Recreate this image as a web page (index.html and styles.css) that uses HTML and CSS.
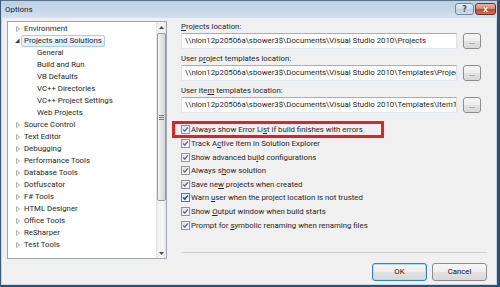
FILE: index.html
```html
<!DOCTYPE html>
<html lang="en">

<head>
  <meta charset="UTF-8">
  <title>Options</title>
  <link rel="stylesheet" href="styles.css">
</head>

<body>
  <!-- shared glyphs -->
  <svg class="defs" width="0" height="0">
    <defs>
      <linearGradient id="cbFill" x1="0" y1="0" x2="1" y2="1">
        <stop offset="0" stop-color="#dadada" />
        <stop offset="1" stop-color="#fbfbfb" />
      </linearGradient>
      <linearGradient id="cbHot" x1="0" y1="0" x2="1" y2="1">
        <stop offset="0" stop-color="#b9dff5" />
        <stop offset="1" stop-color="#eef8fe" />
      </linearGradient>
      <symbol id="chk" viewBox="0 0 9 9">
        <rect x="0.5" y="0.5" width="8" height="8" fill="#f6f6f6" stroke="#939393" />
        <rect x="1.5" y="1.5" width="6" height="6" fill="url(#cbFill)" />
        <path d="M2.2 4.5 L3.8 6.2 L6.9 2.4" fill="none" stroke="#4a5f90" stroke-width="1.2" />
      </symbol>
      <symbol id="chkHot" viewBox="0 0 9 9">
        <rect x="0.5" y="0.5" width="8" height="8" fill="#f2fafe" stroke="#3c7fb1" />
        <rect x="1.5" y="1.5" width="6" height="6" fill="url(#cbHot)" />
        <path d="M2.2 4.5 L3.8 6.2 L6.9 2.4" fill="none" stroke="#1f3f7a" stroke-width="1.3" />
      </symbol>
      <symbol id="triClosed" viewBox="0 0 7 12">
        <path d="M2.5 3.5 L5.5 6 L2.5 8.5 Z" fill="#fff" stroke="#a8a8a8" stroke-width="0.9" />
      </symbol>
      <symbol id="triOpen" viewBox="0 0 7 12">
        <path d="M5.5 3.6 L5.5 8 L1.1 8 Z" fill="#3a3a3a" />
      </symbol>
    </defs>
  </svg>

  <div class="window">
    <div class="titlebar">
      <span class="title">Options</span>
      <div class="caption">
        <span class="cap-btn help">?</span>
        <span class="cap-btn close">x</span>
      </div>
    </div>

    <div class="client">
      <div class="tree">
        <div class="tree-items">
          <div class="node"><svg class="exp"><use href="#triClosed" /></svg><span class="lbl">Environment</span></div>
          <div class="node"><svg class="exp"><use href="#triOpen" /></svg><span class="lbl sel">Projects and Solutions</span></div>
          <div class="node child"><span class="lbl">General</span></div>
          <div class="node child"><span class="lbl">Build and Run</span></div>
          <div class="node child"><span class="lbl">VB Defaults</span></div>
          <div class="node child"><span class="lbl">VC++ Directories</span></div>
          <div class="node child"><span class="lbl">VC++ Project Settings</span></div>
          <div class="node child"><span class="lbl">Web Projects</span></div>
          <div class="node"><svg class="exp"><use href="#triClosed" /></svg><span class="lbl">Source Control</span></div>
          <div class="node"><svg class="exp"><use href="#triClosed" /></svg><span class="lbl">Text Editor</span></div>
          <div class="node"><svg class="exp"><use href="#triClosed" /></svg><span class="lbl">Debugging</span></div>
          <div class="node"><svg class="exp"><use href="#triClosed" /></svg><span class="lbl">Performance Tools</span></div>
          <div class="node"><svg class="exp"><use href="#triClosed" /></svg><span class="lbl">Database Tools</span></div>
          <div class="node"><svg class="exp"><use href="#triClosed" /></svg><span class="lbl">Dotfuscator</span></div>
          <div class="node"><svg class="exp"><use href="#triClosed" /></svg><span class="lbl">F# Tools</span></div>
          <div class="node"><svg class="exp"><use href="#triClosed" /></svg><span class="lbl">HTML Designer</span></div>
          <div class="node"><svg class="exp"><use href="#triClosed" /></svg><span class="lbl">Office Tools</span></div>
          <div class="node"><svg class="exp"><use href="#triClosed" /></svg><span class="lbl">ReSharper</span></div>
          <div class="node"><svg class="exp"><use href="#triClosed" /></svg><span class="lbl">Test Tools</span></div>
        </div>
        <div class="vscroll">
          <div class="sb-btn"><svg width="5" height="3"><path d="M0 3 L2.5 0 L5 3 Z" fill="#4d4d4d" /></svg></div>
          <div class="sb-thumb"><span class="grip"></span></div>
          <div class="sb-track"></div>
          <div class="sb-btn"><svg width="5" height="3"><path d="M0 0 L5 0 L2.5 3 Z" fill="#4d4d4d" /></svg></div>
        </div>
      </div>

      <div class="settings">
        <div class="loc">
          <div class="cap"><u>P</u>rojects location:</div>
          <div class="loc-row">
            <div class="field">\\nlon12p20506a\sbower3$\Documents\Visual Studio 2010\Projects</div>
            <div class="dots">...</div>
          </div>
        </div>
        <div class="loc">
          <div class="cap">User p<u>r</u>oject templates location:</div>
          <div class="loc-row">
            <div class="field"><span class="path">\\nlon12p20506a\sbower3$\Documents\Visual Studio 2010\Templates\ProjectTemplates</span></div>
            <div class="dots">...</div>
          </div>
        </div>
        <div class="loc">
          <div class="cap">User ite<u>m</u> templates location:</div>
          <div class="loc-row">
            <div class="field"><span class="path">\\nlon12p20506a\sbower3$\Documents\Visual Studio 2010\Templates\ItemTemplates</span></div>
            <div class="dots">...</div>
          </div>
        </div>

        <div class="checks">
          <div class="chk marked"><svg class="cb"><use href="#chk" /></svg><span>Always show Error Li<u>s</u>t if build finishes with errors</span></div>
          <div class="chk"><svg class="cb"><use href="#chk" /></svg><span>Track A<u>c</u>tive Item in Solution Explorer</span></div>
          <div class="chk"><svg class="cb"><use href="#chk" /></svg><span>Show advanced bu<u>i</u>ld configurations</span></div>
          <div class="chk"><svg class="cb"><use href="#chk" /></svg><span>Always s<u>h</u>ow solution</span></div>
          <div class="chk"><svg class="cb"><use href="#chk" /></svg><span>Save ne<u>w</u> projects when created</span></div>
          <div class="chk"><svg class="cb"><use href="#chkHot" /></svg><span>Warn <u>u</u>ser when the project location is not trusted</span></div>
          <div class="chk"><svg class="cb"><use href="#chk" /></svg><span>Show <u>O</u>utput window when build starts</span></div>
          <div class="chk"><svg class="cb"><use href="#chk" /></svg><span>Prompt for <u>s</u>ymbolic renaming when renaming files</span></div>
        </div>

        <div class="sep"></div>
        <div class="actions">
          <button class="btn default">OK</button>
          <button class="btn">Cancel</button>
        </div>
      </div>
    </div>
  </div>
</body>

</html>
```

FILE: styles.css
```css
body {
  margin: 0;
  font-family: Roboto, 'Open Sans', sans-serif;
  font-size: 7.8px;
  color: #262626;
  background: #2c5173;
}

.defs {
  display: block;
  width: 0;
  height: 0;
  overflow: hidden;
}

.window {
  width: 500px;
  height: 287px;
  box-sizing: border-box;
  display: flex;
  flex-direction: column;
  border-top: 1px solid #5b7189;
  border-left: 1px solid #3d5a77;
  border-right: 3px solid #2c5173;
  border-bottom: 2px solid #2c5173;
  padding: 0 1px 1px 1px;
  background: linear-gradient(#bccfe4, #d3e0ee 17px, #c6d6e9 18px);
}

/* title bar */
.titlebar {
  height: 17px;
  display: flex;
  justify-content: space-between;
  padding-left: 3px;
}

.title {
  line-height: 17px;
  font-size: 8px;
  color: #1c1c1c;
}

.caption {
  display: flex;
  gap: 1px;
  margin-top: 2px;
}

.cap-btn {
  height: 12px;
  box-sizing: border-box;
  border: 1px solid #74879e;
  border-radius: 3px;
  display: flex;
  align-items: center;
  justify-content: center;
  font: bold 8px 'DejaVu Sans', sans-serif;
}

.help {
  width: 19px;
  background: linear-gradient(#e4ecf5, #cfdbe9 50%, #bccde1 51%, #d2deec);
  color: #43536a;
}

.close {
  width: 21px;
  background: linear-gradient(#ebb3a5, #d98a76 48%, #c3462d 52%, #d7735a);
  border-color: #6a2f25;
  color: #fff;
  text-shadow: 0 0 1px #4a0d05;
}

/* client area */
.client {
  flex: 1;
  display: flex;
  gap: 14px;
  background: #f0f0f0;
  padding: 3px 9px 0 5px;
}

.tree {
  width: 160px;
  height: 238px;
  box-sizing: border-box;
  border: 1px solid #a0a6ae;
  background: #fff;
  display: flex;
}

.tree-items {
  flex: 1;
  padding-top: 1px;
  overflow: hidden;
}

.node {
  height: 12px;
  display: flex;
  align-items: center;
  padding-left: 6px;
  white-space: nowrap;
}

.node.child {
  padding-left: 26px;
}

.exp {
  width: 7px;
  height: 12px;
  flex: none;
}

.lbl {
  line-height: 10px;
  padding: 0 2px;
  border: 1px solid transparent;
  border-radius: 2px;
}

.lbl.sel {
  border-color: #a9cdee;
  background: linear-gradient(#f4f9fe, #deecfb);
}

.vscroll {
  width: 10px;
  display: flex;
  flex-direction: column;
  background: linear-gradient(to right, #e3e3e3, #f5f5f5 30%, #f5f5f5 70%, #e6e6e6);
}

.sb-btn {
  height: 10px;
  display: flex;
  align-items: center;
  justify-content: center;
}

.sb-thumb {
  height: 168px;
  margin: 1px 0 0 1px;
  box-sizing: border-box;
  border: 1px solid #9a9a9a;
  border-radius: 2px;
  background: linear-gradient(to right, #f6f6f6, #e4e4e4 50%, #d4d4d4);
  display: flex;
  align-items: center;
  justify-content: center;
}

.grip {
  width: 5px;
  height: 5px;
  background: repeating-linear-gradient(#7a7a7a 0 1px, transparent 1px 2px);
}

.sb-track {
  flex: 1;
}

/* right side */
.settings {
  width: 306px;
  display: flex;
  flex-direction: column;
}

.loc {
  margin-bottom: 4px;
}

.cap {
  height: 12px;
  line-height: 12px;
}

.loc-row {
  display: flex;
  gap: 6px;
  height: 16px;
}

.field {
  width: 276px;
  box-sizing: border-box;
  border: 1px solid;
  border-color: #abadb3 #dbdfe6 #e3e9ef #e2e3ea;
  background: #fff;
  padding: 0 3px;
  line-height: 14px;
  white-space: nowrap;
  overflow: hidden;
}

.dots,
.btn {
  box-sizing: border-box;
  border: 1px solid #8c8c8c;
  border-radius: 3px;
  background: linear-gradient(#f6f6f6, #eeeeee 50%, #e2e2e2 50%, #d9d9d9);
}

.dots {
  width: 18px;
  flex: none;
  display: flex;
  align-items: center;
  justify-content: center;
  font-size: 7px;
  color: #333;
  padding-top: 1px;
}

.checks {
  padding-top: 6.2px;
}

.chk {
  height: 13.6px;
  display: flex;
  align-items: center;
  gap: 1px;
  white-space: nowrap;
}

.cb {
  width: 9px;
  height: 9px;
  flex: none;
}

/* red annotation frame around the first option */
.chk.marked {
  position: relative;
}

.chk.marked::after {
  content: '';
  position: absolute;
  left: -9px;
  top: -2.2px;
  width: 212px;
  height: 16.8px;
  box-sizing: border-box;
  border: 3.3px solid #d7252f;
}

.sep {
  margin-top: 20px;
  height: 1px;
  background: #cbd1d7;
}

.actions {
  display: flex;
  justify-content: flex-end;
  gap: 5px;
  margin-top: 10px;
}

.btn {
  width: 55px;
  height: 18px;
  padding: 0;
  font: inherit;
  color: #151515;
}

.btn.default {
  border-color: #3c7fb1;
  box-shadow: inset 0 0 0 1px #b4dbf6;
}
```
